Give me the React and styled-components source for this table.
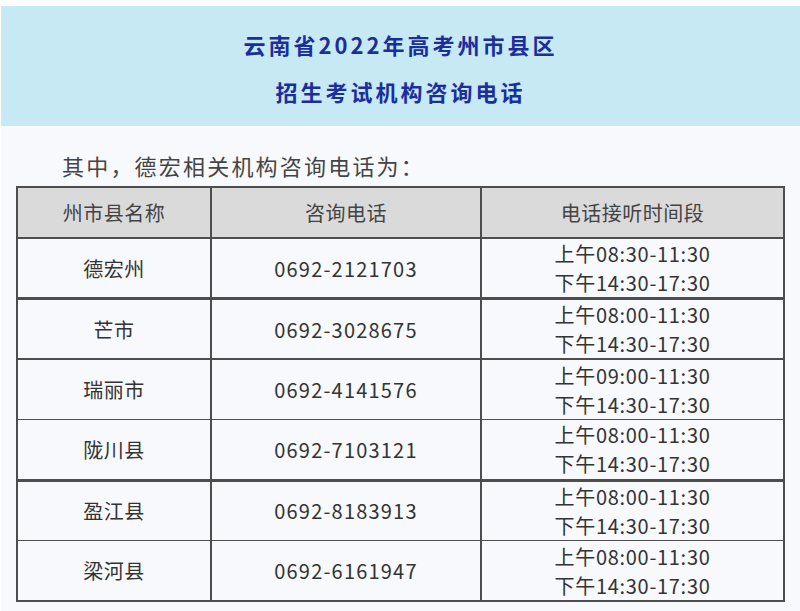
import styled, { createGlobalStyle } from "styled-components";

const GlobalStyle = createGlobalStyle`
  body {
    margin: 0;
    background: #ffffff;
    font-family: "Noto Sans CJK SC", "Noto Sans", sans-serif;
  }
`;

const Page = styled.div`
  width: 799px;
  height: 605px;
  margin-top: 6px;
  margin-left: 1px;
  background: #f7f9fd;
  overflow: hidden;
`;

const Banner = styled.div`
  background: #c6e9f3;
  height: 120px;
  box-sizing: border-box;
  padding-top: 15px;
  text-align: center;
`;

const Title = styled.div`
  color: #1c2e9e;
  font-size: 22px;
  font-weight: 700;
  line-height: 47px;
  letter-spacing: 3px;
`;

const Intro = styled.p`
  margin: 0;
  padding: 24px 0 6px 61px;
  font-size: 22px;
  line-height: 30px;
  letter-spacing: 2.2px;
  color: #444;
`;

const Table = styled.table`
  margin-left: 15px;
  width: 767px;
  border-collapse: collapse;
  table-layout: fixed;
  color: #333;
  font-size: 20px;
  border: 2px solid #4d4d4d;
`;

const HeadCell = styled.th`
  background: #dadada;
  height: 49px;
  padding: 0;
  font-weight: 400;
  color: #444;
  letter-spacing: 0.5px;
  border: 2px solid #4d4d4d;
`;

const Row = styled.tr`
  height: 60.5px;
  td {
    border-top: ${(p) => p.$top}px solid #4d4d4d;
  }
`;

const Cell = styled.td`
  padding: 0;
  text-align: center;
  border-left: 2px solid #4d4d4d;
  border-right: 2px solid #4d4d4d;
  letter-spacing: ${(p) => (p.$num ? "1.2px" : "0.5px")};
`;

const TimeLine = styled.div`
  line-height: 29px;
  letter-spacing: 0.7px;
`;

const rows = [
  ["德宏州", "0692-2121703", "上午08:30-11:30", 2],
  ["芒市", "0692-3028675", "上午08:00-11:30", 3],
  ["瑞丽市", "0692-4141576", "上午09:00-11:30", 2],
  ["陇川县", "0692-7103121", "上午08:00-11:30", 1],
  ["盈江县", "0692-8183913", "上午08:00-11:30", 3],
  ["梁河县", "0692-6161947", "上午08:00-11:30", 1],
];

export default function App() {
  return (
    <Page>
      <GlobalStyle />
      <Banner>
        <Title>云南省2022年高考州市县区</Title>
        <Title>招生考试机构咨询电话</Title>
      </Banner>
      <Intro>其中，德宏相关机构咨询电话为：</Intro>
      <Table>
        <colgroup>
          <col style={{ width: 194 }} />
          <col style={{ width: 270 }} />
          <col style={{ width: 303 }} />
        </colgroup>
        <thead>
          <tr>
            <HeadCell>州市县名称</HeadCell>
            <HeadCell>咨询电话</HeadCell>
            <HeadCell>电话接听时间段</HeadCell>
          </tr>
        </thead>
        <tbody>
          {rows.map(([name, tel, am, top]) => (
            <Row key={name} $top={top}>
              <Cell>{name}</Cell>
              <Cell $num>{tel}</Cell>
              <Cell>
                <TimeLine>{am}</TimeLine>
                <TimeLine>下午14:30-17:30</TimeLine>
              </Cell>
            </Row>
          ))}
        </tbody>
      </Table>
    </Page>
  );
}
